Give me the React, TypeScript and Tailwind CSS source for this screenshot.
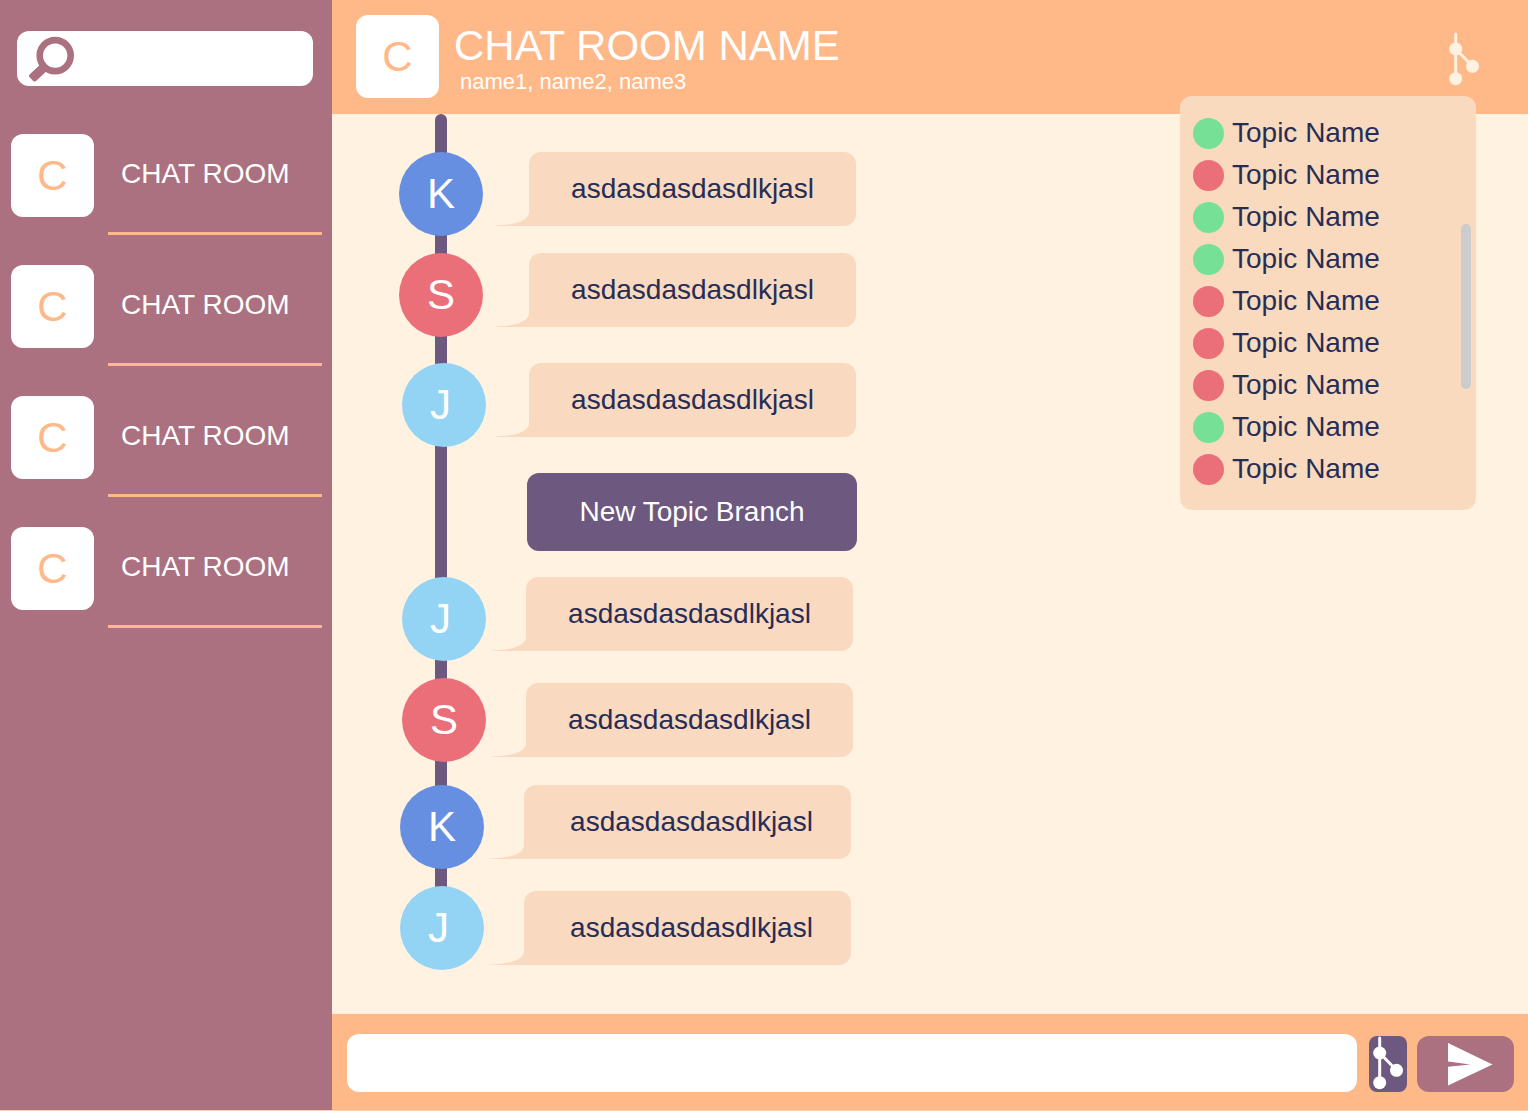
type Person = 'K' | 'S' | 'J';

type Message = {
  id: number;
  from: Person;
  text: string;
  row: string;
  bubble: string;
};

const rooms = [1, 2, 3, 4];

const beforeBranch: Message[] = [
  { id: 1, from: 'K', text: 'asdasdasdasdlkjasl', row: 'items-start pl-[67px]', bubble: 'ml-3' },
  { id: 2, from: 'S', text: 'asdasdasdasdlkjasl', row: 'items-start pl-[67px] mt-[17px]', bubble: 'ml-3' },
  { id: 3, from: 'J', text: 'asdasdasdasdlkjasl', row: 'items-start pl-[70px] mt-[26px]', bubble: 'ml-[9px]' },
];

const afterBranch: Message[] = [
  { id: 4, from: 'J', text: 'asdasdasdasdlkjasl', row: 'items-start pl-[70px]', bubble: 'ml-[6px]' },
  { id: 5, from: 'S', text: 'asdasdasdasdlkjasl', row: 'items-center pl-[70px] mt-[17px]', bubble: 'ml-[6px]' },
  { id: 6, from: 'K', text: 'asdasdasdasdlkjasl', row: 'items-start pl-[68px] mt-[23px]', bubble: 'ml-[6px] [&>p]:pl-2' },
  { id: 7, from: 'J', text: 'asdasdasdasdlkjasl', row: 'items-center pl-[68px] mt-[17px]', bubble: 'ml-[6px] [&>p]:pl-2' },
];

const personColor: Record<Person, string> = {
  K: 'bg-[#678fe1]',
  S: 'bg-[#eb6f79]',
  J: 'bg-[#93d4f5]',
};

const topics = [
  { id: 1, active: true },
  { id: 2, active: false },
  { id: 3, active: true },
  { id: 4, active: true },
  { id: 5, active: false },
  { id: 6, active: false },
  { id: 7, active: false },
  { id: 8, active: true },
  { id: 9, active: false },
];

function SearchIcon() {
  return (
    <svg width="46" height="46" viewBox="0 0 46 46" className="shrink-0 text-[#ac7180]" aria-hidden="true">
      <circle cx="27.2" cy="19.6" r="15.5" fill="none" stroke="currentColor" strokeWidth="6.6" />
      <path
        d="M11.5 29.3 L2 38 Q0.2 39.7 1.6 41.3 L5.2 44.9 Q6.9 46.2 8.6 44.6 L18.2 35.4 L14 26 Z"
        fill="currentColor"
      />
    </svg>
  );
}

function BranchIcon() {
  return (
    <svg width="32" height="54" viewBox="0 0 32 54" aria-hidden="true">
      <path
        d="M7.7 2 V46.7 M7.7 17 L24.5 34.3"
        fill="none"
        stroke="currentColor"
        strokeWidth="3"
        strokeLinecap="round"
      />
      <circle cx="7.7" cy="17" r="6.5" fill="currentColor" />
      <circle cx="7.7" cy="46.7" r="6.5" fill="currentColor" />
      <circle cx="24.5" cy="34.3" r="6.5" fill="currentColor" />
    </svg>
  );
}

function SendIcon() {
  return (
    <svg width="45" height="43" viewBox="0 0 45 43" aria-hidden="true">
      <path d="M0 0 L44.5 21.5 L0 42.5 V23.8 L22.5 21.4 L0 18.4 Z" fill="currentColor" />
    </svg>
  );
}

function RoomBadge() {
  return (
    <span className="flex size-[83px] shrink-0 items-center justify-center rounded-xl bg-white text-[42px] leading-none text-[#ffb888]">
      C
    </span>
  );
}

function MessageRow({ message }: { message: Message }) {
  return (
    <li className={`flex ${message.row}`}>
      <span
        className={`flex size-[84px] shrink-0 items-center justify-center rounded-full text-[42px] leading-none text-white ${personColor[message.from]}`}
      >
        <span className="w-7">{message.from}</span>
      </span>
      <div className={`flex items-end text-[#fad9c1] ${message.bubble}`}>
        <svg width="34" height="14" viewBox="0 0 34 14" aria-hidden="true">
          <path d="M34 0 C34 8 22 13 0 13.4 V14 H34 Z" fill="currentColor" />
        </svg>
        <p className="flex h-[74px] w-[327px] items-center justify-center rounded-xl rounded-bl-none bg-[#fad9c1] text-[28px] text-[#272d55]">
          {message.text}
        </p>
      </div>
    </li>
  );
}

export default function App() {
  return (
    <div className="flex min-h-screen border-b border-[#f5d0bb] bg-[#fff2e1] font-['Liberation_Sans',Arial,sans-serif]">
      <aside className="w-[332px] shrink-0 bg-[#ac7180] pt-[31px]">
        <label className="mr-[19px] ml-[17px] flex h-[55px] items-center rounded-xl bg-white pl-[11px]">
          <SearchIcon />
          <input
            type="search"
            aria-label="Search chat rooms"
            className="h-full min-w-0 flex-1 rounded-r-xl px-3 text-[28px] text-[#272d55] outline-none"
          />
        </label>
        <nav aria-label="Chat rooms">
          <ul className="mt-12 flex flex-col gap-[30px] pr-[10px] pl-[11px]">
            {rooms.map((room) => (
              <li key={room}>
                <a href="#room" className="flex items-start gap-[14px]">
                  <RoomBadge />
                  <span className="h-[101px] flex-1 border-b-3 border-[#ffb888] pl-[13px] text-[28px] leading-[79px] text-white">
                    CHAT ROOM
                  </span>
                </a>
              </li>
            ))}
          </ul>
        </nav>
      </aside>

      <section className="flex min-w-0 flex-1 flex-col">
        <header className="relative z-10 flex h-[114px] shrink-0 items-start bg-[#ffb888] pt-[15px] pl-6 text-white">
          <RoomBadge />
          <div className="mt-[10px] ml-[15px] whitespace-nowrap">
            <h1 className="text-[42px] leading-[42px]">CHAT ROOM NAME</h1>
            <p className="pl-[6px] text-[22px] leading-[30px]">name1, name2, name3</p>
          </div>
          <button type="button" aria-label="Show topics" className="mt-[17px] mr-12 ml-auto text-[#fff2e1]">
            <BranchIcon />
          </button>

          <div className="absolute top-24 right-[52px] flex w-[296px] items-start rounded-xl bg-[#fadabf] pt-4 pr-[5px] pb-5 pl-[13px]">
            <ul className="flex-1 text-[28px] text-[#272d55]">
              {topics.map((topic) => (
                <li key={topic.id}>
                  <button type="button" className="flex h-[42px] items-center gap-2">
                    <span
                      className={`size-[31px] rounded-full ${topic.active ? 'bg-[#77e097]' : 'bg-[#eb6f79]'}`}
                    />
                    Topic Name
                  </button>
                </li>
              ))}
            </ul>
            <div className="mt-28 h-[165px] w-[10px] rounded-full bg-[#cccccc]" />
          </div>
        </header>

        <main className="flex-1 pb-10">
          <div className="relative pt-[38px]">
            <div className="absolute top-0 bottom-10 left-[103px] w-3 rounded-t-md bg-[#6d597f]" />
            <div className="relative">
              <ol>
                {beforeBranch.map((message) => (
                  <MessageRow key={message.id} message={message} />
                ))}
              </ol>
              <button
                type="button"
                className="my-[26px] ml-[195px] flex h-[78px] w-[330px] items-center justify-center rounded-xl bg-[#6d597f] text-[28px] text-white"
              >
                New Topic Branch
              </button>
              <ol>
                {afterBranch.map((message) => (
                  <MessageRow key={message.id} message={message} />
                ))}
              </ol>
            </div>
          </div>
        </main>

        <footer className="flex h-24 shrink-0 items-end bg-[#ffb888] pr-[14px] pb-[18px] pl-[15px]">
          <input
            type="text"
            aria-label="Message"
            className="h-[58px] min-w-0 flex-1 rounded-xl bg-white px-4 text-[28px] text-[#272d55] outline-none"
          />
          <button
            type="button"
            aria-label="Start a topic branch"
            className="ml-3 flex h-14 w-[38px] items-start justify-center rounded-lg bg-[#6d597f] text-white"
          >
            <BranchIcon />
          </button>
          <button
            type="button"
            aria-label="Send"
            className="ml-[10px] flex h-14 w-[97px] items-center rounded-xl bg-[#ac7180] pl-[31px] text-white"
          >
            <SendIcon />
          </button>
        </footer>
      </section>
    </div>
  );
}
